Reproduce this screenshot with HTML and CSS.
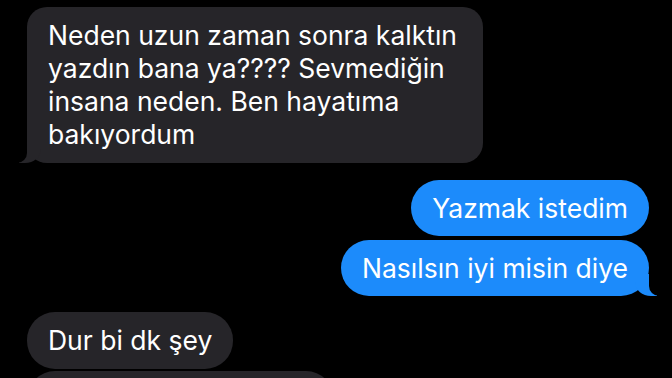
FILE: index.html
```html
<!DOCTYPE html>
<html lang="tr">
<head>
    <meta charset="UTF-8">
    <meta name="viewport" content="width=device-width, initial-scale=1.0">
    <title>Mesajlar</title>
    <link rel="stylesheet" href="styles.css">
</head>
<body>
    <div class="chat">
        <div class="bubble received tail first">Neden uzun zaman sonra kalktın yazdın bana ya???? Sevmediğin insana neden. Ben hayatıma bakıyordum</div>
        <div class="bubble sent group-top">Yazmak istedim</div>
        <div class="bubble sent tail">Nasılsın iyi misin diye</div>
        <div class="bubble received short">Dur bi dk şey</div>
        <div class="bubble received next"></div>
    </div>
</body>
</html>
```

FILE: styles.css
```css
body {
    margin: 0;
    background: #000;
    font-family: Inter, "Noto Sans", sans-serif;
    color: white;
    overflow: hidden;
}

.chat {
    display: flex;
    flex-direction: column;
    padding: 7px 23px 0 27px;
}

.bubble {
    position: relative;
    width: fit-content;
    font-size: 26.5px;
    line-height: 33px;
    padding: 12px 21px;
    border-radius: 20px;
}

.received {
    background: #262529;
    align-self: flex-start;
}

.sent {
    background: #1c8bfb;
    align-self: flex-end;
    padding: 12px 21px 11px;
    border-radius: 28px;
}

.first {
    max-width: 414px;
    margin-bottom: 17px;
}

.group-top {
    margin-bottom: 4px;
}

.short {
    margin-top: 16px;
    border-radius: 28px;
}

.next {
    margin-top: 2px;
    width: 265px;
    height: 33px;
    border-radius: 28px;
}

/* iMessage tail */
.tail::before,
.tail::after {
    content: "";
    position: absolute;
    bottom: 0;
    height: 22px;
}

.received.tail::before {
    left: -8px;
    width: 22px;
    background: #262529;
    border-bottom-right-radius: 16px 14px;
}

.received.tail::after {
    left: -12px;
    width: 12px;
    background: #000;
    border-bottom-right-radius: 10px;
}

.sent.tail::before {
    right: -8px;
    width: 22px;
    background: #1c8bfb;
    border-bottom-left-radius: 16px 14px;
}

.sent.tail::after {
    right: -12px;
    width: 12px;
    background: #000;
    border-bottom-left-radius: 10px;
}
```
